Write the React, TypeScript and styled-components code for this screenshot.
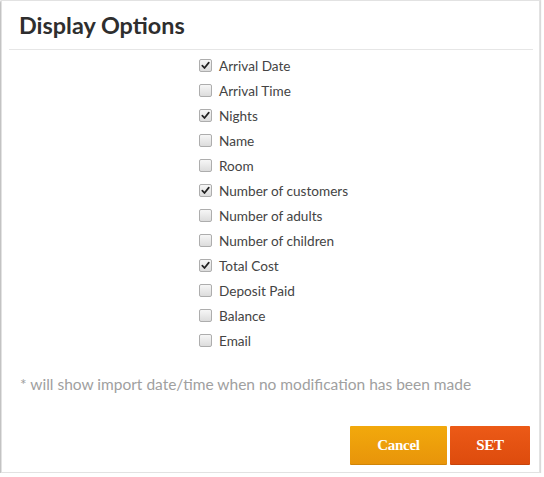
import React from "react";
import styled, { createGlobalStyle } from "styled-components";

const Global = createGlobalStyle`
  html, body { margin: 0; padding: 0; background: #fff; }
  body { font-family: Lato, "Open Sans", sans-serif; }
`;

const Modal = styled.div`
  box-sizing: border-box;
  margin: 0 0 0 1px;
  width: 539px;
  height: 473px;
  background: #fff;
  border: 1px solid #e2e2e2;
  box-shadow: -1px 1px 2px rgba(0,0,0,0.35), 1px 0 1px rgba(0,0,0,0.12);
  display: flex;
  flex-direction: column;
`;

const Header = styled.div`
  margin: 0 6px 0 7px;
  height: 48px;
  border-bottom: 1px solid #e6e6e6;
  display: flex;
  align-items: center;
  padding-left: 10px;
`;

const Title = styled.h1`
  margin: 0;
  font-family: Lato, sans-serif;
  font-weight: 700;
  font-size: 23.4px;
  color: #2e2e2e;
`;

const List = styled.div`
  display: flex;
  flex-direction: column;
  padding: 3px 0 0 197px;
`;

const Row = styled.label`
  display: flex;
  align-items: center;
  height: 25px;
  gap: 7px;
  font-size: 13.6px;
  color: #444;
`;

const Box = styled.span<{ $checked: boolean }>`
  box-sizing: border-box;
  width: 13px;
  height: 13px;
  border: 1px solid #adadad;
  border-radius: 2px;
  background: linear-gradient(#f6f6f6, #dcdcdc);
  display: flex;
  align-items: center;
  justify-content: center;
`;

const Note = styled.p`
  margin: 22px 0 0 18px;
  font-size: 15.5px;
  color: #a0a0a0;
`;

const Footer = styled.div`
  margin-top: auto;
  display: flex;
  justify-content: flex-end;
  gap: 3px;
  padding: 0 9px 7px 0;
`;

const Button = styled.button<{ $variant: "cancel" | "set" }>`
  height: 39px;
  width: ${(p) => (p.$variant === "cancel" ? "97px" : "80px")};
  border: none;
  border-radius: 1px;
  color: #fff;
  font-family: "Liberation Serif", serif;
  font-weight: 700;
  font-size: 15px;
  letter-spacing: -0.3px;
  background: ${(p) =>
    p.$variant === "cancel"
      ? "linear-gradient(#f2a90c, #e8940a)"
      : "linear-gradient(#ec5a17, #dd4b0d)"};
  box-shadow: inset 0 -1px 0 rgba(0,0,0,0.1);
`;

const Check = () => (
  <svg width="9" height="9" viewBox="0 0 9 9">
    <path d="M1.3 4.6 L3.5 7 L7.8 1.6" fill="none" stroke="#222" strokeWidth="1.7" strokeLinecap="round" strokeLinejoin="round" />
  </svg>
);

const items: [string, boolean][] = [
  ["Arrival Date", true],
  ["Arrival Time", false],
  ["Nights", true],
  ["Name", false],
  ["Room", false],
  ["Number of customers", true],
  ["Number of adults", false],
  ["Number of children", false],
  ["Total Cost", true],
  ["Deposit Paid", false],
  ["Balance", false],
  ["Email", false],
];

export default function App() {
  return (
    <>
      <Global />
      <Modal>
        <Header>
          <Title>Display Options</Title>
        </Header>
        <List>
          {items.map(([label, checked]) => (
            <Row key={label}>
              <Box $checked={checked}>{checked && <Check />}</Box>
              {label}
            </Row>
          ))}
        </List>
        <Note>* will show import date/time when no modification has been made</Note>
        <Footer>
          <Button $variant="cancel">Cancel</Button>
          <Button $variant="set">SET</Button>
        </Footer>
      </Modal>
    </>
  );
}
